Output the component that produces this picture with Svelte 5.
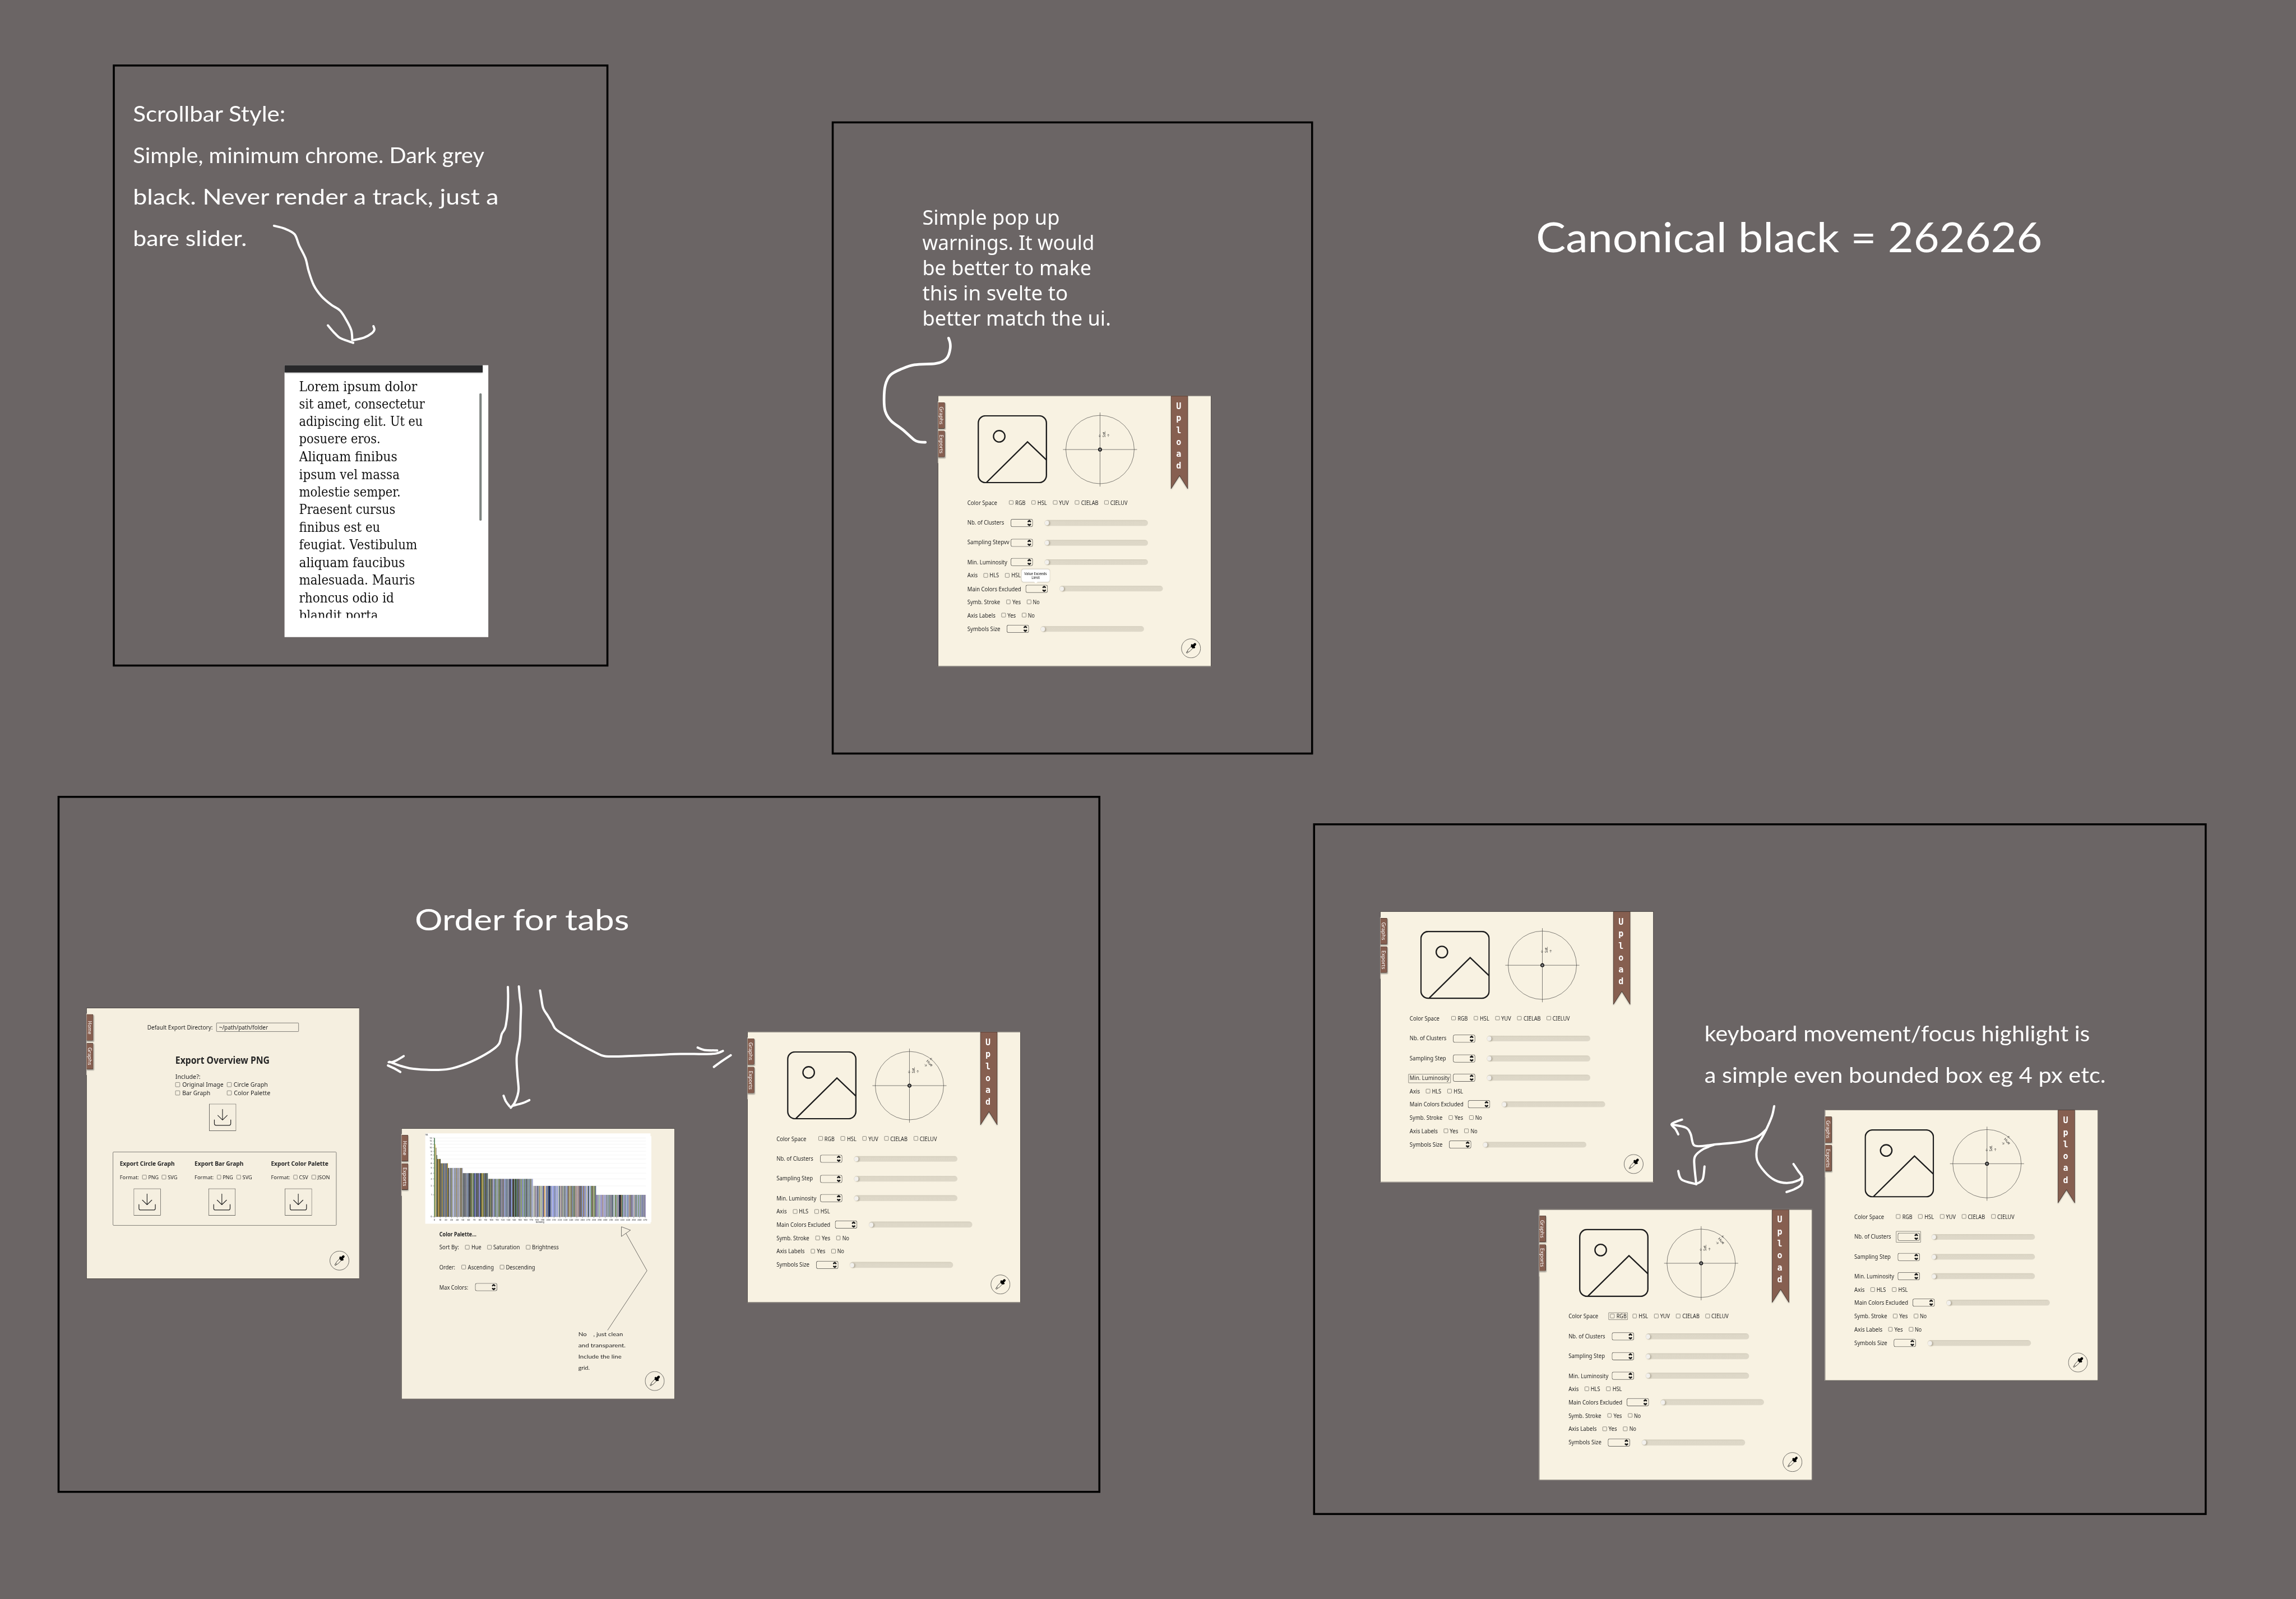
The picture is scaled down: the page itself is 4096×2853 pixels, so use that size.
<script>
  const SCALE = 4096 / 6940;

  // Stretches a line of text horizontally (or vertically) to a given length.
  function fit(node, [size, axis]) {
    const r = node.getBoundingClientRect();
    const natural = (axis === 'y' ? r.height : r.width) / SCALE;
    if (!size || !natural) return;
    node.style.transform = axis === 'y' ? `scaleY(${size / natural})` : `scaleX(${size / natural})`;
  }

  // Smooth path through a list of points, given in a local grid.
  function curve(flat, [ox, oy, kx, ky]) {
    const p = [];
    for (let i = 0; i < flat.length; i += 2) p.push([ox + flat[i] / kx, oy + flat[i + 1] / ky]);
    let d = `M${p[0][0].toFixed(1)} ${p[0][1].toFixed(1)}`;
    for (let i = 0; i < p.length - 1; i++) {
      const a = p[i - 1] || p[i], b = p[i], c = p[i + 1], e = p[i + 2] || c;
      const n = [b[0] + (c[0] - a[0]) / 6, b[1] + (c[1] - a[1]) / 6, c[0] - (e[0] - b[0]) / 6, c[1] - (e[1] - b[1]) / 6, c[0], c[1]];
      d += 'C' + n.map((v) => v.toFixed(1)).join(' ');
    }
    return d;
  }

  const gA = [330, 180, 1.0316, 1.568];
  const gB = [2500, 560, 1.3067, 1.96];
  const gC = [1120, 2660, 1.3876, 2.0907];
  const gD = [4980, 2980, 1.0453, 1.3067];
  const arrows = [
    [[514, 788, 548, 802, 578, 828, 592, 880, 612, 942, 622, 1002, 638, 1070, 662, 1122, 692, 1162, 720, 1190, 740, 1236, 755, 1284, 758, 1330], gA],
    [[682, 1260, 700, 1292, 718, 1318, 740, 1332, 761, 1343], gA],
    [[824, 1264, 827, 1280, 820, 1296, 795, 1318, 762, 1330], gA],
    [[480, 906, 486, 935, 486, 970, 476, 1018, 455, 1045, 425, 1057, 345, 1064, 295, 1088, 250, 1125, 230, 1185, 225, 1270, 230, 1340, 252, 1395, 300, 1450, 345, 1510, 365, 1521, 388, 1523], gB, 8],
    [[576, 677, 577, 740, 575, 830, 568, 915, 562, 945, 550, 975, 538, 1038, 500, 1086, 420, 1150, 345, 1190, 285, 1201, 180, 1194, 130, 1177, 80, 1150], gC],
    [[139, 1114, 110, 1140, 92, 1151, 76, 1152], gC],
    [[73, 1173, 100, 1192, 125, 1214], gC],
    [[622, 673, 626, 740, 631, 805, 629, 900, 626, 1010, 613, 1120, 616, 1230, 621, 1320, 616, 1365, 604, 1410, 588, 1440], gC],
    [[558, 1364, 567, 1398, 583, 1431], gC],
    [[666, 1392, 640, 1410, 598, 1427], gC],
    [[711, 699, 716, 745, 724, 810, 744, 860, 762, 905, 780, 948, 850, 1014, 900, 1057, 945, 1092, 980, 1113, 1040, 1116, 1200, 1106, 1300, 1100, 1400, 1101, 1450, 1097, 1478, 1081], gC],
    [[1372, 1060, 1400, 1075, 1454, 1078], gC],
    [[1511, 1108, 1475, 1144, 1440, 1182], gC],
    [[400, 476, 393, 515, 375, 568, 360, 603, 347, 632, 346, 688, 370, 735, 402, 768, 440, 779, 478, 768, 488, 754], gD],
    [[461, 704, 475, 730, 488, 755, 486, 785, 465, 803, 439, 815], gD],
    [[375, 568, 345, 598, 292, 617, 212, 627, 175, 633, 146, 629, 136, 585, 120, 560, 76, 548], gD],
    [[109, 529, 90, 537, 76, 548, 88, 566, 97, 587], gD],
    [[212, 627, 175, 646, 150, 674, 148, 712, 154, 784], gD],
    [[97, 732, 108, 766, 154, 784], gD],
    [[180, 714, 174, 765, 154, 783], gD]
  ];

  const frames = [
    [341, 195, 1498, 1820],
    [2514, 367, 1455, 1914],
    [174, 2406, 3152, 2107],
    [3969, 2489, 2701, 2091]
  ];

  const notes = [
    { cls: 'hand', x: 402, y: 279, lines: [['Scrollbar Style:', 461], ['Simple, minimum chrome. Dark grey', 1062], ['black. Never render a track, just a', 1105], ['bare slider.', 344]] },
    { cls: 'plain', x: 2788, y: 618, lines: [['Simple pop up', 415], ['warnings. It would', 520], ['be better to make', 511], ['this in svelte to', 440], ['better match the ui.', 570]] },
    { cls: 'hand title', x: 4643, y: 635, lines: [['Canonical black = 262626', 1530]] },
    { cls: 'hand heading', x: 1254, y: 2722, lines: [['Order for tabs', 648]] },
    { cls: 'hand', x: 5152, y: 3060, lines: [['keyboard movement/focus highlight is', 1165], ['a simple even bounded box eg 4 px etc.', 1213]] }
  ];

  const lorem = [['Lorem ipsum dolor', 357], ['sit amet, consectetur', 380], ['adipiscing elit. Ut eu', 374], ['posuere eros.', 246], ['Aliquam finibus', 297], ['ipsum vel massa', 304], ['molestie semper.', 307], ['Praesent cursus', 291], ['finibus est eu', 245], ['feugiat. Vestibulum', 357], ['aliquam faucibus', 320], ['malesuada. Mauris', 350], ['rhoncus odio id', 287], ['blandit porta', 239]];

  const settings = (sampling, w) => [
    { label: 'Color Space', w: 90, cell: 126.6, opts: [['RGB', 30.5], ['HSL', 28.5], ['YUV', 29.5], ['CIELAB', 52], ['CIELUV', 52]] },
    { label: 'Nb. of Clusters', w: 111, cell: 131.6, slider: true, drop: true },
    { label: sampling, w, cell: 131.6, slider: true, drop: true },
    { label: 'Min. Luminosity', w: 120.5, cell: 131.6, slider: true },
    { label: 'Axis', w: 31, cell: 49.3, opts: [['HLS', 28.5], ['HSL', 28.5]] },
    { label: 'Main Colors Excluded', w: 162.5, cell: 176.6, slider: true },
    { label: 'Symb. Stroke', w: 99, cell: 117.9, opts: [['Yes', 25.5], ['No', 20.5]] },
    { label: 'Axis Labels', w: 85, cell: 103.1, opts: [['Yes', 25.5], ['No', 20.5]] },
    { label: 'Symbols Size', w: 99.5, cell: 119.5, slider: true, drop: true }
  ];

  const uploads = [
    { x: 2834.8, y: 1196.3, rows: settings('Sampling Stepvv', 127), warn: true },
    { x: 2258.6, y: 3119, rows: settings('Sampling Step', 110), hue: true },
    { x: 4171.9, y: 2755.2, rows: settings('Sampling Step', 110), focus: 'label' },
    { x: 4651.9, y: 3655.7, rows: settings('Sampling Step', 110), hue: true, focus: 'option' },
    { x: 5515.7, y: 3355, rows: settings('Sampling Step', 110), hue: true, focus: 'spin' }
  ];

  const exportsCols = [
    { title: 'Export Circle Graph', w: 166, opts: [['PNG', 31.5], ['SVG', 29]] },
    { title: 'Export Bar Graph', w: 148, opts: [['PNG', 31.5], ['SVG', 29]] },
    { title: 'Export Color Palette', w: 173.5, opts: [['CSV', 27.5], ['JSON', 37]] }
  ];

  const sorting = [
    { label: 'Sort By:', w: 59.5, cell: 77.8, opts: [['Hue', 30], ['Saturation', 80.3], ['Brightness', 81]] },
    { label: 'Order:', w: 48, cell: 66.8, opts: [['Ascending', 78.8], ['Descending', 88.5]] },
    { label: 'Max Colors:', w: 87, cell: 108, stepper: true }
  ];

  // Histogram: tick heights by count, bars by ranking
  const tickY = [532, 410, 360, 321, 289, 260, 234, 210, 188, 167, 147, 128, 110, 93];
  const steps = [[209, 13], [211, 11], [218, 10], [221, 8], [240, 7], [281, 6], [363, 5], [500, 4], [748, 3], [1097, 2], [1369, 1]];
  const tones = {
    13: ['#2f6a3a'], 11: ['#d8b43c'], 10: ['#9c9f86', '#a8a58a'], 8: ['#35512f'],
    7: ['#1f2a1e', '#20301f', '#2b3a22', '#1a1d1c', '#7a7f52', '#c9a24a'],
    6: ['#56697a', '#7f86ab', '#6b6f4a', '#c2a03a', '#3c3a2c', '#8b93c2', '#565a55', '#8a6f3a'],
    5: ['#8c93a8', '#3c4038', '#565a55', '#8b93c2', '#20241f', '#b08f4a', '#6b6f4a', '#a9aedb', '#4a4a3a'],
    4: ['#2c4a26', '#5e8a3e', '#8a8fc0', '#34382c', '#7f8a52', '#1d1d18', '#50579a', '#5a5346', '#a98e3e', '#3f4f2c', '#7280a0'],
    3: ['#9aa0d6', '#5c63a2', '#1e1f1c', '#6f9a4a', '#7a8ac0', '#3f4f55', '#8088c0', '#5e7a68', '#8a8f5a', '#6a4a3a', '#7b82b6', '#33402f'],
    2: ['#a9b0ee', '#3a4a7a', '#8088c0', '#1e1f2c', '#d4d8f4', '#6f9a4a', '#a9aeb5', '#556a3a', '#e0a24a', '#8a96c0', '#5e6a55', '#c0bca0', '#7a4a3a', '#4a5a8a'],
    1: ['#8088c8', '#5f6a8c', '#6f9a5a', '#a9aeb5', '#101318', '#8a8f5a', '#7a6aa0', '#4f6a4a', '#b8bce0', '#5a5560', '#b08a3e', '#8a94d8']
  };
  const bars = [];
  let seed = 7;
  for (let i = 0; i < 371; i++) {
    const x = 205.5 + i * 3.138;
    const s = steps.find((q) => x + 1 < q[0]) || steps[10];
    seed = (seed * 1103515245 + 12345) % 2147483648;
    const set = tones[s[1]];
    bars.push({ x, y: tickY[s[1]], c: set[Math.floor((seed / 2147483648) * set.length)] });
  }
  const xticks = Array.from({ length: 38 }, (_, i) => i * 10);
</script>

{#snippet t(text, w)}<span class="fit" style="width:{w}px"><span use:fit={[w]}>{text}</span></span>{/snippet}

{#snippet options(list)}
  {#each list as [name, w]}
    <span class="opt"><i class="box"></i>{@render t(name, w)}</span>
  {/each}
{/snippet}

{#snippet stepper()}
  <svg class="stepper" width="67" height="24" viewBox="0 0 67 24">
    <rect x=".6" y=".6" width="65.8" height="22.8" rx="5" fill="none" stroke="#1b1b1b" stroke-width="1.2" />
    <path d="M53 7.6 56.2 4.9 59.4 7.6M53 16.4 56.2 19.1 59.4 16.4" fill="none" stroke="#1b1b1b" stroke-width="4.4" stroke-linecap="round" stroke-linejoin="round" />
  </svg>
{/snippet}

{#snippet tabs(first, w1, second, w2)}
  <div class="tabs">
    <div class="tab"><span use:fit={[w1, 'y']}>{first}</span></div>
    <div class="tab"><span use:fit={[w2, 'y']}>{second}</span></div>
  </div>
{/snippet}

{#snippet dropper()}
  <svg class="dropper" width="60" height="60" viewBox="-30 -30 60 60">
    <circle r="28.8" fill="none" stroke="#222" stroke-width="1.1" />
    <g transform="rotate(44)">
      <path d="M-3.8-10V-17a3.8 3.8 0 0 1 7.6 0V-10z" fill="#000" />
      <rect x="-7.4" y="-11.4" width="14.8" height="5.4" rx="1.6" fill="#000" />
      <path d="M-4.8-7H4.8V-3.4H-4.8z" fill="#000" />
      <path d="M-3.6-4V8Q-3.4 11-2 13.5Q-2.6 19 0 19.4Q2.6 19 2 13.5Q3.4 11 3.6 8V-4M-2 14Q0 15.5 2 14" fill="none" stroke="#111" stroke-width="1.2" />
    </g>
  </svg>
{/snippet}

{#snippet download()}
  <svg class="download" width="82" height="82" viewBox="0 0 82 82" fill="none" stroke="#222">
    <rect x=".6" y=".6" width="80.8" height="80.8" stroke-width="1.1" />
    <path d="M40.6 16.5V48.6M26.4 35 40.6 49 54.8 35" stroke-width="1.9" stroke-linecap="round" stroke-linejoin="round" />
    <path d="M16 48.5V59.5Q16 65 21.5 65H60Q65.5 65 65.5 59.5V48.5" stroke-width="2.1" stroke-linecap="round" />
  </svg>
{/snippet}

<main>
  <div class="board">
    {#each frames as [x, y, w, h]}
      <section class="frame" style="left:{x}px;top:{y}px;width:{w}px;height:{h}px"></section>
    {/each}

    {#each notes as n}
      <div class="note {n.cls}" style="left:{n.x}px;top:{n.y}px">
        {#each n.lines as [text, w]}<div>{@render t(text, w)}</div>{/each}
      </div>
    {/each}

    <article class="scroller">
      <div class="bar"></div>
      <div class="content">
        {#each lorem as [text, w]}<div>{@render t(text, w)}</div>{/each}
      </div>
      <div class="thumb"></div>
    </article>

    {#each uploads as u}
      <article class="window" style="left:{u.x}px;top:{u.y}px">
        {@render tabs('Graphs', 54, 'Exports', 57)}
        <div class="hero">
          <svg width="210" height="206" viewBox="0 0 210 206" fill="none" stroke="#1d1d1d" stroke-width="4">
            <rect x="2" y="2" width="206" height="202" rx="22" />
            <circle cx="65.3" cy="64" r="17.3" />
            <path d="M26.8 203.4 150.8 81 208 135.5" />
          </svg>
          <svg width="226" height="226" viewBox="-113 -113 226 226" fill="none" stroke="#2a2a2a" stroke-width="1">
            <circle r="103.3" />
            <path d="M-112 0H112M0-112V112" />
            <circle r="4.8" fill="#808080" stroke="#111" stroke-width="2.6" />
            <path d="M-1-46V-38.4M-4.2-41.6-1-38.2 2.2-41.6M25-38.6V-46M21.8-42.8 25-46.2 28.2-42.8" stroke-width=".9" />
            <text class="axis" transform="translate(16 -37.6) rotate(-90)" textLength="18.5" lengthAdjust="spacingAndGlyphs">Sat.</text>
            {#if u.hue}
              <g transform="translate(61 -68)">
                <text class="axis" transform="rotate(47) translate(-11.5 4)" textLength="23" lengthAdjust="spacingAndGlyphs">Hue</text>
                <path d="M8-9 2.6-14.4M2.4-9.6V-14.6H7.4M-15.4 3-10 8.4M-9.8 3.6V8.6H-14.8" stroke-width=".9" />
              </g>
            {/if}
          </svg>
        </div>
        <div class="rows">
          {#each u.rows as r, i}
            <div class="row" class:loose={i > 0 && i < 4} class:tight={i > 3}>
              <span class="cell" style="width:{r.cell}px">{@render t(r.label, r.w)}</span>
              {#if r.opts}{@render options(r.opts)}{/if}
              {#if r.slider}
                <span class="control" class:drop={r.drop}>{@render stepper()}<span class="slider"><i></i></span></span>
              {/if}
            </div>
          {/each}
        </div>
        <div class="ribbon">
          <svg width="52" height="284" viewBox="0 0 52 284"><path d="M.6.6H51.4V281.5L26.3 241.6.6 281.5z" fill="#865f50" stroke="#1d1512" stroke-width="1.1" /></svg>
          <div class="letters">{#each 'Upload' as ch}<span>{ch}</span>{/each}</div>
        </div>
        {#if u.warn}
          <div class="tip">{@render t('Value Exceeds', 68)}{@render t('Limit', 24.5)}</div>
        {/if}
        {#if u.focus}<div class="focus {u.focus}"></div>{/if}
        {@render dropper()}
      </article>
    {/each}

    <article class="window soft exporter">
      {@render tabs('Home', 40, 'Graphs', 54)}
      <div class="dir">{@render t('Default Export Directory:', 198)}<span class="path">{@render t('~/path/path/folder', 148)}</span></div>
      <h1>{@render t('Export Overview PNG', 285)}</h1>
      <div class="include">
        <div>{@render t('Include?:', 76)}</div>
        <div class="pair">{@render options([['Original Image', 124.5], ['Circle Graph', 103.5]])}</div>
        <div class="pair bars">{@render options([['Bar Graph', 84.5], ['Color Palette', 110]])}</div>
      </div>
      <div class="main-download">{@render download()}</div>
      <div class="panel">
        {#each exportsCols as c}
          <div class="col">
            <h2>{@render t(c.title, c.w)}</h2>
            <div class="format">{@render t('Format:', 58)}{@render options(c.opts)}</div>
            {@render download()}
          </div>
        {/each}
      </div>
      {@render dropper()}
    </article>

    <article class="window soft grapher">
      {@render tabs('Home', 44, 'Exports', 57)}
      <svg class="chart" width="684" height="273.4" viewBox="155 67 1247 504" preserveAspectRatio="none">
        <path d="M155 67H1397V83H1402V562H1397V571H155z" fill="#fff" />
        {#each tickY as y, i}
          {#if i > 0}<path d="M206 {y}H1372" stroke="#e9e9ea" stroke-width="1.6" />{/if}
          <path d="M197 {y}H206" stroke="#555" stroke-width="1.4" />
          <text x="193" y={y + 4.3} text-anchor="end">{i}</text>
        {/each}
        {#each bars as b}
          <rect x={b.x} y={b.y} width="3.25" height={532 - b.y} fill={b.c} />
        {/each}
        <path d="M206 93V532" stroke="#2f6a3a" stroke-width="2" />
        <path d="M204 532.6H1372" stroke="#666" stroke-width="1" />
        {#each xticks as v}
          <path d="M{206.5 + v * 3.138} 532V540" stroke="#555" stroke-width="1.3" />
          <text x={206.5 + v * 3.138} y="553" text-anchor="middle">{v}</text>
        {/each}
        <text x="155" y="80">nb.</text>
        <text x="788" y="567" text-anchor="middle">Ranking</text>
      </svg>
      <div class="palette">
        <h3>{@render t('Color Palette…', 112)}</h3>
        {#each sorting as r}
          <div class="row">
            <span class="cell" style="width:{r.cell}px">{@render t(r.label, r.w)}</span>
            {#if r.opts}{@render options(r.opts)}{/if}
            {#if r.stepper}{@render stepper()}{/if}
          </div>
        {/each}
      </div>
      <svg class="pointer" width="826" height="819" viewBox="0 0 826 819" fill="none" stroke="#262626" stroke-width="1.1">
        <path d="M665.3 297.6 692.7 307.9 665.3 326.9zM679 317.4 742.6 430.4 623.6 610.4" />
      </svg>
      <div class="scribble">
        <div>{@render t('No    , just clean', 135)}</div>
        <div>{@render t('and transparent.', 143)}</div>
        <div>{@render t('Include the line', 130.5)}</div>
        <div>{@render t('grid.', 34.5)}</div>
      </div>
      {@render dropper()}
    </article>

    <svg class="arrows" width="6940" height="4834" viewBox="0 0 6940 4834" fill="none" stroke="#fff" stroke-linecap="round" stroke-linejoin="round">
      {#each arrows as [pts, grid, sw]}
        <path d={curve(pts, grid)} stroke-width={sw || 6.8} />
      {/each}
    </svg>
  </div>
</main>

<style>
  :global(body) { margin: 0; background: #6b6565; }
  main { width: 4096px; height: 2853px; overflow: hidden; background: #6b6565; }
  .board { position: relative; width: 6940px; height: 4834px; transform-origin: 0 0; transform: scale(0.590202); font-family: "Noto Sans", sans-serif; color: #262626; }
  .frame { position: absolute; box-sizing: border-box; border: 6.5px solid #000; }
  .fit { display: inline-block; white-space: pre; flex: none; }
  .fit > span { display: inline-block; transform-origin: 0 50%; }

  .note { position: absolute; color: #fff; white-space: nowrap; }
  .note > div { display: flex; }
  .hand { font: 66px/125.8px Lato, sans-serif; }
  .hand.title { font-size: 124px; line-height: 159px; }
  .hand.heading { font-size: 90px; line-height: 112px; }
  .plain { font-size: 62px; line-height: 76px; }

  .scroller { position: absolute; left: 860px; top: 1104px; width: 616px; height: 822px; background: #fff; }
  .bar { width: 599px; height: 22px; background: #28282a; box-shadow: 0 2px 5px rgba(0, 0, 0, .35); }
  .content { height: 726px; margin: 15.5px 0 0 44px; overflow: hidden; font: 40px/53.27px "DejaVu Serif", serif; color: #111; }
  .content > div { display: flex; }
  .thumb { position: absolute; right: 20px; top: 85px; width: 7px; height: 385px; border-radius: 3px; background: #7d8380; }

  .window { position: absolute; width: 826.5px; height: 819px; background: #f8f2e2; box-shadow: inset 0 0 0 1.2px #262222; font-size: 17.5px; line-height: 24px; }
  .soft { background: #f5efe0; }
  .tabs { position: absolute; left: 0; top: 17px; height: 170px; padding: 2.5px 0 14px; border-left: 2px solid #d9d2c6; }
  .tab { display: flex; align-items: center; justify-content: center; box-sizing: border-box; width: 20px; height: 80px; margin: 0 0 6.6px -1px; border: 1px solid #1d1512; border-left: 0; border-radius: 0 3px 3px 0; background: #865f50; box-shadow: 1px 3px 3px rgba(0, 0, 0, .3); color: #fff; font-size: 16px; line-height: 18px; }
  .tab span { writing-mode: vertical-rl; }

  .hero { display: flex; gap: 46.9px; height: 260.8px; padding: 50px 0 0 120.7px; }
  .hero svg:first-child { margin-top: 9px; }
  .axis { font-size: 11px; fill: #2a2a2a; stroke: none; }
  .rows { padding-left: 88.9px; }
  .row { display: flex; align-items: center; height: 24px; white-space: nowrap; }
  .loose { margin-top: 36.1px; }
  .tight { margin-top: 16.1px; }
  .cell { display: flex; flex: none; }
  .opt { display: flex; align-items: center; margin-right: 18.4px; }
  .box { box-sizing: border-box; flex: none; width: 12.8px; height: 12.8px; margin-right: 5.6px; border: 1px solid #4a4a46; border-radius: 2px; }
  .control { display: flex; align-items: center; }
  .drop { position: relative; top: 1.6px; }
  .stepper { flex: none; display: block; }
  .slider { width: 313px; height: 17.6px; margin-left: 34.5px; border-radius: 9px; background: linear-gradient(#d2ccbb, #ddd7c7 22%, #ded8c8 90%, #e2dccd); }
  .slider i { display: block; width: 13px; height: 14px; margin: 2.4px 0 0 1px; border-radius: 50%; background: #f2f0ec; box-shadow: 3px 1px 4px rgba(90, 80, 60, .4); }

  .ribbon { position: absolute; left: 704.4px; top: 0; }
  .ribbon svg { display: block; filter: drop-shadow(0 2px 2px rgba(0, 0, 0, .35)); }
  .letters { position: absolute; left: 0; top: 13.5px; width: 47px; display: flex; flex-direction: column; align-items: center; color: #fff; font: bold 25.5px/36.1px "DejaVu Sans Mono", monospace; }
  .dropper { position: absolute; left: 735.7px; top: 734.2px; }

  .tip { position: absolute; left: 253.4px; top: 525px; box-sizing: border-box; width: 84.5px; height: 37.7px; padding-top: 7px; display: flex; flex-direction: column; align-items: center; border-radius: 7px; background: #fff; box-shadow: 0 0 3px rgba(0, 0, 0, .22); color: #000; font-size: 11px; line-height: 12.4px; }
  .tip::after { content: ""; position: absolute; left: 37px; bottom: -5px; border: 6px solid transparent; border-top-color: #fff; border-bottom: 0; }
  .focus { position: absolute; box-sizing: border-box; border: 1px solid #4a4a46; border-radius: 1px; }
  .focus.label { left: 85px; top: 491.7px; width: 128px; height: 26.7px; }
  .focus.option { left: 210.4px; top: 312.2px; width: 58px; height: 22px; }
  .focus.spin { left: 215.2px; top: 367.3px; width: 75.6px; height: 34px; }

  .exporter { left: 260.8px; top: 3046.8px; }
  .dir { display: flex; align-items: center; padding: 45px 0 0 184.3px; font-size: 18px; }
  .path { box-sizing: border-box; width: 248.5px; height: 27px; margin-left: 11px; padding-left: 7px; border: 1.2px solid #333; border-radius: 2px; }
  h1, h2, h3 { display: flex; margin: 0; font-weight: 700; }
  h1 { margin: 66.7px 0 0 269.3px; font-size: 29.5px; line-height: 40px; }
  .include { padding: 16.4px 0 0 269.5px; font-size: 19.5px; line-height: 25px; }
  .include > div { display: flex; }
  .pair { height: 25.4px; align-items: center; }
  .pair:not(.bars) { margin-top: -1px; }
  .pair :global(.opt) { margin-right: 10.5px; }
  .pair :global(.box) { width: 14px; height: 14px; margin-right: 6.5px; }
  .bars :global(.opt:first-child) { margin-right: 51.2px; }
  .main-download { display: flex; margin: 20px 0 0 371.3px; }
  .download { display: block; flex: none; }
  .panel { box-sizing: border-box; display: flex; width: 676.3px; height: 223.3px; margin: 63.4px 0 0 80px; padding: 23px 0 0 20px; border: 1.2px solid #333; border-radius: 3px; }
  .col { width: 225.9px; flex: none; }
  .col:nth-child(2) { width: 230.9px; }
  h2 { font-size: 18.8px; line-height: 24px; }
  .format { display: flex; margin: 16.5px 0 22px; font-size: 16.5px; white-space: nowrap; }
  .format :global(.opt) { margin: 0 0 0 10px; }
  .format :global(.opt .box) { margin-right: 5px; }
  .col .download { margin-left: 42.5px; }

  .grapher { left: 1213.2px; top: 3411.1px; }
  .chart { display: block; margin: 0 0 0 71.8px; padding-top: 15.2px; }
  .chart text { font: 600 12px Inter, sans-serif; fill: #666; }
  .palette { padding: 18.4px 0 0 115.2px; }
  h3 { height: 24px; font-size: 17.5px; }
  .palette .row { margin-bottom: 36.2px; }
  .palette h3 + .row { margin-top: 16.3px; }
  .pointer { position: absolute; left: 0; top: 0; }
  .scribble { position: absolute; left: 534.5px; top: 605px; font: 17px/34px Lato, sans-serif; }
  .scribble > div { display: flex; }

  .arrows { position: absolute; left: 0; top: 0; pointer-events: none; }
</style>
